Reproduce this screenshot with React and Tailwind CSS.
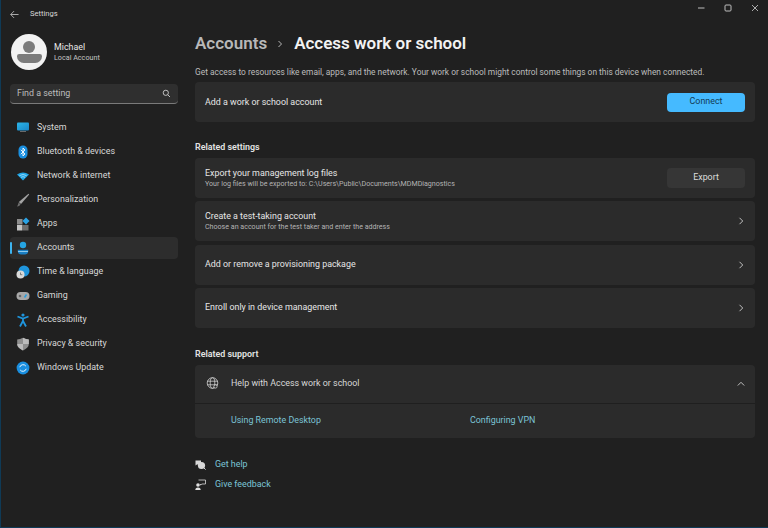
import React from "react";

const SystemIcon = () => (
  <svg width="14" height="14" viewBox="0 0 14 14"><defs><linearGradient id="sys" x1="0" y1="0" x2="1" y2="1"><stop offset="0" stopColor="#2bb5e8"/><stop offset="1" stopColor="#1a86c8"/></linearGradient></defs><rect x="1" y="1.5" width="12" height="8" rx="1" fill="url(#sys)"/><rect x="4" y="10" width="6" height="1" fill="#6a6a6a"/></svg>
);
const BtIcon = () => (
  <svg width="14" height="14" viewBox="0 0 14 14"><rect x="2.5" y="0.5" width="9" height="13" rx="4.5" fill="#1a8fe0"/><path d="M4.8 4.8 9 9 7 11V3l2 2-4.2 4.2" fill="none" stroke="#fff" strokeWidth="0.9"/></svg>
);
const WifiIcon = () => (
  <svg width="14" height="14" viewBox="0 0 14 14"><path d="M1 5.5Q7 1.5 13 5.5L7 11.5Z" fill="#1fa5e6"/><path d="M3.4 6.7Q7 4.2 10.6 6.7" stroke="#bfeaff" strokeWidth="0.7" fill="none"/><path d="M5 8.3Q7 7 9 8.3" stroke="#bfeaff" strokeWidth="0.7" fill="none"/></svg>
);
const BrushIcon = () => (
  <svg width="14" height="14" viewBox="0 0 14 14"><path d="M12.5 0.8 13.2 1.6 5 11 2.8 9Z" fill="#a3a3a3"/><path d="M2.6 9.4 4.6 11.2Q3.6 13.4 1 13.4 2 12 2.6 9.4Z" fill="#6f6f6f"/></svg>
);
const AppsIcon = () => (
  <svg width="14" height="14" viewBox="0 0 14 14"><rect x="1" y="2" width="5.5" height="5.5" fill="#8c8c8c"/><rect x="1" y="8" width="5.5" height="5.5" fill="#c4c4c4"/><rect x="7" y="8" width="5.5" height="5.5" fill="#6e6e6e"/><rect x="7.5" y="1.5" width="5" height="5" transform="rotate(-45 10 4)" fill="#2aa3e6"/></svg>
);
const AccIcon = () => (
  <svg width="14" height="14" viewBox="0 0 14 14"><circle cx="7" cy="4" r="3.2" fill="#25a5e4"/><path d="M1.8 8.8h10.4v1.6Q12 13.6 7 13.6T1.8 10.4Z" fill="#1a7fc4"/><path d="M2 10.5h10" stroke="#bfeaff" strokeWidth="0.7"/></svg>
);
const TimeIcon = () => (
  <svg width="14" height="14" viewBox="0 0 14 14"><circle cx="8" cy="6" r="5.5" fill="#1f95dd"/><circle cx="4.5" cy="9.5" r="4" fill="#d9d9d9"/><path d="M4.5 7.5v2.2h1.8" stroke="#555" strokeWidth="0.7" fill="none"/></svg>
);
const GameIcon = () => (
  <svg width="14" height="14" viewBox="0 0 14 14"><rect x="0.5" y="3" width="13" height="8" rx="4" fill="#a8a8a8"/><circle cx="4" cy="7" r="1.3" fill="#666"/><path d="M8.5 8.5 10.5 5.5" stroke="#2a9fe0" strokeWidth="1.6"/></svg>
);
const A11yIcon = () => (
  <svg width="14" height="14" viewBox="0 0 14 14"><circle cx="7" cy="2" r="1.6" fill="#1f95dd"/><path d="M1.5 3.5 7 5.5l5.5-2M7 5.5V8M7 8l-3 5.5M7 8l3 5.5" stroke="#1f95dd" strokeWidth="1.8" fill="none"/></svg>
);
const ShieldIcon = () => (
  <svg width="14" height="14" viewBox="0 0 14 14"><path d="M7 0.8Q10 2.6 12.8 2.6V7Q12.8 11 7 13.4 1.2 11 1.2 7V2.6Q4 2.6 7 0.8Z" fill="#8f8f8f"/><path d="M7 0.8Q10 2.6 12.8 2.6V7H7Z" fill="#bcbcbc"/><path d="M7 7H1.2Q1.4 11 7 13.4Z" fill="#bcbcbc"/></svg>
);
const UpdateIcon = () => (
  <svg width="14" height="14" viewBox="0 0 14 14"><circle cx="7" cy="7" r="6.4" fill="#1a8fe0"/><path d="M3.8 6.2A3.4 3.4 0 0 1 9.8 5M10.2 7.8A3.4 3.4 0 0 1 4.2 9" stroke="#fff" strokeWidth="0.9" fill="none"/></svg>
);

const nav = [
  ["System", SystemIcon],
  ["Bluetooth & devices", BtIcon],
  ["Network & internet", WifiIcon],
  ["Personalization", BrushIcon],
  ["Apps", AppsIcon],
  ["Accounts", AccIcon],
  ["Time & language", TimeIcon],
  ["Gaming", GameIcon],
  ["Accessibility", A11yIcon],
  ["Privacy & security", ShieldIcon],
  ["Windows Update", UpdateIcon],
];

const Chevron = () => (
  <svg width="8" height="8" viewBox="0 0 8 8" fill="none" stroke="#d0d0d0" strokeWidth="0.9"><path d="M2.5 0.8 5.7 4 2.5 7.2" /></svg>
);

function Row({ title, sub, children }) {
  return (
    <div className="h-[40px] rounded-[4px] bg-[#2b2b2b] flex items-center justify-between pl-[10px] pr-[10px] shrink-0">
      <div className="flex flex-col">
        <span className="text-[8.9px] leading-[11px] text-[#e6e6e6]">{title}</span>
        {sub && <span className="text-[7.1px] leading-[9px] text-[#b4b4b4]">{sub}</span>}
      </div>
      {children || <Chevron />}
    </div>
  );
}

export default function App() {
  return (
    <div className="w-[768px] h-[528px] bg-[#202020] flex flex-col overflow-hidden border-l border-b border-[#0f3a56] text-white" style={{ fontFamily: 'Roboto, "Noto Sans", sans-serif' }}>
      <div className="h-[28px] flex items-center shrink-0 relative">
        <svg className="ml-[9px]" width="9" height="9" viewBox="0 0 10 10" fill="none" stroke="#c8c8c8" strokeWidth="0.9"><path d="M9.5 5H0.8M4.5 1.2.8 5l3.7 3.8" /></svg>
        <span className="ml-[11px] text-[7.6px] text-[#d6d6d6]">Settings</span>
        <div className="ml-auto flex items-center gap-[19px] pr-[9px] pb-[12px]">
          <svg width="8" height="8" viewBox="0 0 8 8" stroke="#bdbdbd" strokeWidth="1"><path d="M1 4h6.5" /></svg>
          <svg width="8" height="8" viewBox="0 0 8 8" fill="none" stroke="#bdbdbd" strokeWidth="1"><rect x="1" y="1" width="6" height="6" rx="1" /></svg>
          <svg width="8" height="8" viewBox="0 0 8 8" stroke="#bdbdbd" strokeWidth="0.9"><path d="M1 1l6 6M7 1 1 7" /></svg>
        </div>
      </div>

      <div className="flex flex-1 min-h-0">
        <aside className="w-[189px] shrink-0 pl-[9px] pr-[12px] flex flex-col">
          <div className="flex items-center gap-[7px] h-[36px] mt-[6px] pl-[1px]">
            <div className="w-[36px] h-[36px] rounded-full bg-[#f2f2f2] flex flex-col items-center justify-center">
              <div className="w-[12px] h-[12px] rounded-full bg-[#7b7b7b]" />
              <div className="w-[25px] h-[9px] mt-[1px] rounded-b-[9px] rounded-t-[3px] bg-[#7b7b7b]" />
            </div>
            <div className="flex flex-col">
              <span className="text-[8.9px] leading-[12px] text-[#e8e8e8]">Michael</span>
              <span className="text-[7.2px] leading-[10px] text-[#c4c4c4]">Local Account</span>
            </div>
          </div>
          <div className="mt-[14px] h-[20px] rounded-[4px] bg-[#2f2f2f] border-b border-[#7a7a7a] flex items-center justify-between pl-[7px] pr-[7px]">
            <span className="text-[8.9px] text-[#bdbdbd]">Find a setting</span>
            <svg width="9" height="9" viewBox="0 0 9 9" fill="none" stroke="#cfcfcf" strokeWidth="0.9"><circle cx="3.8" cy="3.8" r="2.6" /><path d="M5.8 5.8 8 8" /></svg>
          </div>
          <nav className="mt-[13px] flex flex-col gap-[2px]">
            {nav.map(([label, Icon]) => {
              const active = label === "Accounts";
              return (
                <div key={label} className={`relative h-[22px] flex items-center rounded-[4px] pl-[6px] ${active ? "bg-[#2d2d2d]" : ""}`}>
                  {active && <span className="absolute left-0 top-[5px] h-[12px] w-[2px] rounded-full bg-[#3db4f0]" />}
                  <Icon />
                  <span className="ml-[7px] text-[8.9px] text-[#d8d8d8]">{label}</span>
                </div>
              );
            })}
          </nav>
        </aside>

        <main className="flex-1 min-w-0 pl-[5px] pr-[13px] flex flex-col">
          <div className="flex items-center h-[32px]">
            <span className="text-[17px] font-semibold text-[#b8b8b8]">Accounts</span>
            <svg className="ml-[9px] mr-[10px]" width="8" height="8" viewBox="0 0 8 8" fill="none" stroke="#c8c8c8" strokeWidth="0.9"><path d="M2.5 1 5.5 4 2.5 7" /></svg>
            <span className="text-[17px] font-semibold text-[#f2f2f2]">Access work or school</span>
          </div>
          <p className="mt-[6px] h-[16px] leading-[12px] text-[8.4px] text-[#bcbcbc] whitespace-nowrap">Get access to resources like email, apps, and the network. Your work or school might control some things on this device when connected.</p>
          <Row title="Add a work or school account">
            <button className="w-[78px] h-[19px] rounded-[4px] bg-[#45baff] text-[8.9px] text-[#123a55]">Connect</button>
          </Row>

          <h2 className="mt-[15px] h-[21px] text-[8.9px] leading-[21px] font-semibold text-[#e4e4e4]">Related settings</h2>
          <div className="flex flex-col gap-[3.33px]">
            <Row title="Export your management log files" sub={"Your log files will be exported to: C:\\Users\\Public\\Documents\\MDMDiagnostics"}>
              <button className="w-[78px] h-[20px] rounded-[4px] bg-[#363636] text-[8.9px] text-[#dcdcdc]">Export</button>
            </Row>
            <Row title="Create a test-taking account" sub="Choose an account for the test taker and enter the address" />
            <Row title="Add or remove a provisioning package" />
            <Row title="Enroll only in device management" />
          </div>

          <h2 className="mt-[15px] h-[22px] text-[8.9px] leading-[22px] font-semibold text-[#e4e4e4]">Related support</h2>
          <div className="rounded-[4px] bg-[#2b2b2b]">
            <div className="h-[39px] flex items-center justify-between pl-[11px] pr-[10px] border-b border-[#1f1f1f]">
              <div className="flex items-center gap-[12px]">
                <svg width="13" height="13" viewBox="0 0 13 13" fill="none" stroke="#d0d0d0" strokeWidth="0.8"><circle cx="6.5" cy="6" r="5.3" /><ellipse cx="6.5" cy="6" rx="2.3" ry="5.3" /><path d="M1.3 4.2h10.4M1.3 7.8h10.4" /><circle cx="9.5" cy="9.5" r="1.6" fill="#2b2b2b" /></svg>
                <span className="text-[8.9px] text-[#d8d8d8]">Help with Access work or school</span>
              </div>
              <svg width="8" height="8" viewBox="0 0 8 8" fill="none" stroke="#d0d0d0" strokeWidth="0.9"><path d="M0.8 5.5 4 2.3 7.2 5.5" /></svg>
            </div>
            <div className="h-[34px] flex items-center pl-[36px] text-[8.9px] text-[#7cc4d6]">
              <span className="w-[239px]">Using Remote Desktop</span>
              <span>Configuring VPN</span>
            </div>
          </div>

          <div className="mt-[21px] flex flex-col gap-[8px]">
            <div className="flex items-center h-[12px] gap-[9px]">
              <svg width="11" height="11" viewBox="0 0 11 11"><path d="M0.5 1.5h5.5v4H2L0.5 6.5Z" fill="#d8d8d8" /><circle cx="6.5" cy="6.5" r="3.6" fill="#d8d8d8" /><path d="M9 9l1.6 1.6" stroke="#d8d8d8" /></svg>
              <span className="text-[8.9px] text-[#7cc4d6]">Get help</span>
            </div>
            <div className="flex items-center h-[12px] gap-[9px]">
              <svg width="11" height="11" viewBox="0 0 11 11"><circle cx="3" cy="6" r="1.8" fill="#e0e0e0" /><path d="M0.3 11Q0.3 8.4 3 8.4T5.7 11Z" fill="#e0e0e0" /><path d="M3.5 1h7v4H7L5.5 6V5" fill="none" stroke="#d8d8d8" strokeWidth="0.8" /></svg>
              <span className="text-[8.9px] text-[#7cc4d6]">Give feedback</span>
            </div>
          </div>
        </main>
      </div>
    </div>
  );
}
